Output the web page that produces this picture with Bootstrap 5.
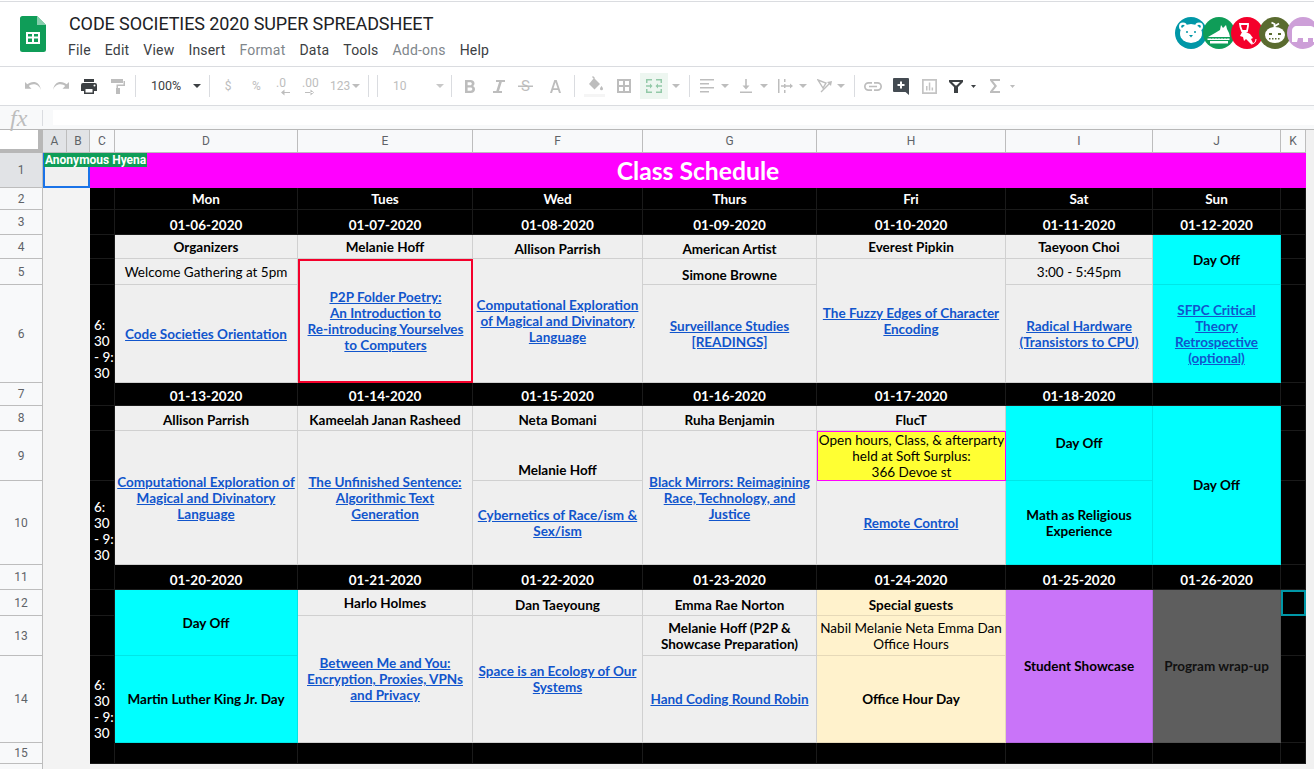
<!DOCTYPE html>
<html lang="en">
    <head>
        <meta charset="UTF-8" />
        <title>CODE SOCIETIES 2020 SUPER SPREADSHEET</title>
        <!-- Bootstrap CSS -->
        <link href="https://cdn.jsdelivr.net/npm/bootstrap@5.3.0/dist/css/bootstrap.min.css" rel="stylesheet" />
        <style>
            html, body { height: 769px; overflow: hidden; }
            body { background: #f1f1f1; font-family: Roboto, "Liberation Sans", sans-serif; }

            /* top chrome */
            .app-head { height: 67px; background: #fff; border-top: 1px solid #fff; border-bottom: 1px solid #dadce0; box-shadow: inset 0 1px 0 #dadce0; }
            .app-logo { margin: 15px 0 0 20px; }
            .app-names { margin: 13px 0 0 23px; }
            .doc-title { font-family: Roboto, sans-serif; font-size: 18px; line-height: 20px; color: #202124; letter-spacing: -.1px; }
            .menu-row { margin: 7px 0 0 -1px; gap: 14px; font-size: 14px; line-height: 18px; color: #3c4043; letter-spacing: .2px; }
            .menu-off { color: #80868b; }
            .people { margin: 16px -5px 0 auto; }
            .people svg { margin-left: -4px; display: block; }
            .people svg:first-child { margin-left: 0; }

            /* toolbar */
            .tool-row { height: 39px; background: #fff; border-bottom: 1px solid #dadce0; padding-left: 25px; color: #bdbdbd; font-size: 12px; }
            .tool-row svg { flex: none; display: block; }
            .tool-sep { flex: none; width: 1px; height: 22px; background: #dadce0; }
            .tool-txt { flex: none; text-align: center; white-space: nowrap; }
            .tool-dark { color: #3c4043; font-size: 12.5px; }
            .merge-on { flex: none; width: 28px; height: 26px; background: #edf6f0; }
            .w8 { width: 8px; } .w12 { width: 12px; } .w20 { width: 20px; } .w30 { width: 30px; }
            .g2 { margin-left: 2px; } .g4 { margin-left: 4px; } .g5 { margin-left: 5px; } .g6 { margin-left: 6px; }
            .g7 { margin-left: 7px; } .g8 { margin-left: 8px; } .g9 { margin-left: 9px; } .g10 { margin-left: 10px; }
            .g11 { margin-left: 11px; } .g12 { margin-left: 12px; } .g13 { margin-left: 13px; } .g14 { margin-left: 14px; }
            .g15 { margin-left: 15px; } .g16 { margin-left: 16px; } .g17 { margin-left: 17px; } .g18 { margin-left: 18px; }
            .g20 { margin-left: 20px; } .g31 { margin-left: 31px; }

            /* formula bar */
            .fx-row { height: 24px; background: #f8f9fa; border-bottom: 1px solid #b7b7b7; }
            .fx-mark { width: 42px; padding-left: 10px; font: italic 24px/22px "Liberation Serif", serif; color: #bdbdbd; }
            .fx-line { width: 1px; height: 16px; background: #dadce0; }
            .fx-input { height: 15px; margin-left: 10px; background: #fff; }

            /* sheet */
            .sheet { table-layout: fixed; width: 1306px; border-collapse: separate; border-spacing: 0; font-family: Lato, "Liberation Sans", sans-serif; font-size: 13.5px; line-height: 16px; color: #000; }
            .sheet td, .sheet th { padding: 0 2px; text-align: center; vertical-align: middle; border-right: 1px solid #d0d0d0; border-bottom: 1px solid #d0d0d0; overflow: hidden; }
            .sheet a { color: #1155cc; font-weight: 700; }
            .sheet th.corner { background: #fff; border-right: 5px solid #b7b7b7; border-bottom: 4px solid #b7b7b7; }
            .sheet th.col-h, .sheet th.row-h { background: #f8f9fa; color: #5f6368; font: 400 12px/14px Roboto, sans-serif; border-color: #bdbdbd; padding: 0; }
            .sheet th.head-on { background: #e1e3e6; }
            .cw-head { width: 43px; } .cw-a { width: 24px; } .cw-b { width: 23px; } .cw-c { width: 25px; }
            .cw-d { width: 183px; } .cw-e { width: 175px; } .cw-f { width: 170px; } .cw-g { width: 174px; }
            .cw-h { width: 189px; } .cw-i { width: 147px; } .cw-j { width: 128px; } .cw-k { width: 25px; }
            .rh-top { height: 23px; } .rh-1 { height: 35px; } .rh-2 { height: 22px; } .rh-3 { height: 25px; } .rh-4 { height: 24px; }
            .rh-5 { height: 26px; } .rh-6 { height: 98px; } .rh-7 { height: 23px; } .rh-8 { height: 25px; } .rh-9 { height: 50px; }
            .rh-10 { height: 84px; } .rh-11 { height: 25px; } .rh-12 { height: 26px; } .rh-13 { height: 40px; } .rh-14 { height: 87px; }
            .rh-15 { height: 21px; } .rh-16 { height: 6px; }
            .rh-3 td, .rh-7 td, .rh-11 td { vertical-align: bottom; padding-bottom: 1px; }
            .rh-8 td.soft { vertical-align: bottom; padding-bottom: 2px; }
            .sheet td.pale { background: #f3f3f3; border-color: #f3f3f3; }
            .sheet td.picked { position: relative; overflow: visible; background: #f0f0f0; border: 0; box-shadow: inset 0 0 0 2px #1a73e8; }
            .hyena { position: absolute; left: 1px; top: 0; z-index: 2; padding: 0 1px; height: 14px; background: #0f9d58; color: #fff; font: 700 12px/14px Roboto, sans-serif; white-space: nowrap; }
            .sheet td.title-cell { background: #ff00ff; color: #fff; font-size: 24.7px; font-weight: 700; border: 0; overflow: visible; }
            .sheet td.ink { background: #000; color: #fff; font-weight: 700; border-color: #1a1a1a; }
            .sheet td.hours { background: #000; color: #fff; font-weight: 500; text-align: left; vertical-align: bottom; padding: 0 0 1px 4px; border-color: #000; border-right-color: #1a1a1a; white-space: nowrap; }
            .sheet td.soft { background: #efefef; }
            .sheet td.sky { background: #00ffff; font-weight: 700; border-color: #00e6e6; }
            .sheet td.cream { background: #fff2cc; border-color: #e6d9b8; }
            .sheet td.grape { background: #c974f9; font-weight: 700; border-color: #b468e0; }
            .sheet td.ash { background: #5e5e5e; font-weight: 700; color: #111; border-color: #555; }
            .sheet td.red-box { box-shadow: inset 0 0 0 2px #f4002b; border: 0; }
            .sheet td.lemon { background: #ffff33; box-shadow: inset 0 0 0 1px #ff00ff; border: 0; padding: 0 1px; }
            .sheet td.teal-box { background: #000; box-shadow: inset 0 0 0 2px #0097a7; border: 0; }
            .low { vertical-align: bottom !important; padding-bottom: 2px !important; }
            .rh-4 .low, .rh-5 .low { padding-bottom: 1px !important; }
        </style>
    </head>
    <body>
        <!-- Title and menus -->
        <header class="app-head d-flex">
            <svg class="app-logo" width="26" height="36" viewBox="0 0 26 36">
                <path d="M2.500 0H17l9 9v24.500a2.500 2.500 0 0 1-2.500 2.500h-21A2.500 2.500 0 0 1 0 33.500v-31A2.500 2.500 0 0 1 2.500 0z" fill="#0f9d58"/>
                <path d="M17 0l9 9h-9z" fill="#87ceac"/>
                <path d="M6 16h14v12H6zm2 2v2.500h4V18zm6 0v2.500h4V18zm-6 4.500V26h4v-3.500zm6 0V26h4v-3.500z" fill="#fff" fill-rule="evenodd"/>
            </svg>
            <div class="app-names">
                <div class="doc-title">CODE SOCIETIES 2020 SUPER SPREADSHEET</div>
                <div class="menu-row d-flex">
                    <span>File</span><span>Edit</span><span>View</span><span>Insert</span><span class="menu-off">Format</span><span>Data</span><span>Tools</span><span class="menu-off">Add-ons</span><span>Help</span>
                </div>
            </div>
            <div class="people d-flex">
                <!-- bear -->
                <svg width="32" height="32" viewBox="0 0 32 32"><circle cx="16" cy="16" r="16" fill="#0097a7"/><circle cx="8" cy="9.500" r="4" fill="#fff"/><circle cx="24" cy="9.500" r="4" fill="#fff"/><circle cx="8" cy="9.500" r="1.800" fill="#0097a7"/><circle cx="24" cy="9.500" r="1.800" fill="#0097a7"/><ellipse cx="16" cy="16.500" rx="11" ry="9.500" fill="#fff"/><circle cx="12" cy="15" r="1" fill="#0097a7"/><circle cx="20" cy="15" r="1" fill="#0097a7"/><path d="M14 18h4l-2 2.500z" fill="#0097a7"/></svg>
                <!-- crocodile -->
                <svg width="32" height="32" viewBox="0 0 32 32"><circle cx="16" cy="16" r="16" fill="#0f9d58"/><path d="M5 20l7-4 5-3 1-5 2 3 3-3 1 4 2 4 1 4z" fill="#fff"/><path d="M4.500 21.500h22V23h-22z" fill="#fff"/><path d="M7 24h18v2.500H7z" fill="#fff"/><path d="M8 20.500h1v1H8zm3 0h1v1h-1zm3 0h1v1h-1zm3 0h1v1h-1zm3 0h1v1h-1zm3 0h1v1h-1z" fill="#0f9d58"/></svg>
                <!-- monkey -->
                <svg width="32" height="32" viewBox="0 0 32 32"><circle cx="16" cy="16" r="16" fill="#f4002b"/><path d="M9 7h8v2l-1 5h-5L9.500 10z" fill="none" stroke="#fff" stroke-width="1.800"/><path d="M11 15l-2 4 3 1 1 4 2-2 2 2 3 3 2-1-2-4 2-1-3-4-4-2z" fill="#fff"/><path d="M20 27c3 0 5-2 5-5" fill="none" stroke="#fff" stroke-width="1"/></svg>
                <!-- pumpkin -->
                <svg width="32" height="32" viewBox="0 0 32 32"><circle cx="16" cy="16" r="16" fill="#5a6b2f"/><path d="M15.500 11V7l-3-1.500M16 9l4-2.500" fill="none" stroke="#fff" stroke-width="1.800"/><ellipse cx="16" cy="18" rx="10" ry="8" fill="#fff"/><path d="M10 16h3v2h-3zm9 0h3v2h-3zM10 21h1.500v1.500H10zm3 0h1.500v1.500H13zm3 0h1.500v1.500H16zm3 0h1.500v1.500H19z" fill="#5a6b2f"/></svg>
                <!-- elephant -->
                <svg width="32" height="32" viewBox="0 0 32 32"><circle cx="16" cy="16" r="16" fill="#cd9fd8"/><path d="M5 25V14c0-3 2-5 5-5h12c4 0 7 2 8 6v10h-4v-4h-5v4h-5v-4h-5l-1 4z" fill="#fff"/></svg>
            </div>
        </header>

        <!-- Toolbar -->
        <div class="tool-row d-flex align-items-center">
            <svg width="16" height="8" viewBox="0 0 16 8"><path d="M16 8C14.500 4 11.500 2.300 8.500 2.300 6.500 2.300 5 3 3.800 4L6.500 6.800H0V0l2.300 2.300C3.900 1 6 0 8.500 0c3.700 0 6.500 2.500 7.500 8z" fill="#bdbdbd"/></svg>
            <svg class="g12" width="16" height="8" viewBox="0 0 16 8"><path d="M0 8C1.500 4 4.500 2.300 7.500 2.300 9.500 2.300 11 3 12.200 4L9.500 6.800H16V0l-2.300 2.300C12.100 1 10 0 7.500 0 3.800 0 1 2.500 0 8z" fill="#bdbdbd"/></svg>
            <svg class="g12" width="16" height="15" viewBox="0 0 16 15"><path d="M3 0h10v3H3zM2 4h12a2 2 0 0 1 2 2v6h-3v3H3v-3H0V6a2 2 0 0 1 2-2zm2.500 6v3.500h7V10zM13.500 5.500a1 1 0 1 0 0 2 1 1 0 0 0 0-2z" fill="#3c4043" fill-rule="evenodd"/></svg>
            <svg class="g14" width="14" height="15" viewBox="0 0 14 15"><path d="M0 0h12v4H0zM12.500 2H14v5H7v2h2v6H5V9h.500V5.500h7z" fill="#bdbdbd"/></svg>
            <span class="tool-sep g10"></span>
            <span class="tool-txt tool-dark w30 g15">100%</span>
            <svg class="g12" width="8" height="4" viewBox="0 0 8 4"><path d="M0 0h8L4 4z" fill="#3c4043"/></svg>
            <span class="tool-sep g8"></span>
            <span class="tool-txt w8 g14">$</span>
            <span class="tool-txt w8 g20">%</span>
            <svg class="g16" width="15" height="20" viewBox="0 0 15 20"><text x="0" y="11" font-family="Roboto, sans-serif" font-size="12" fill="#bdbdbd">.0</text><path d="M6 16h8v1H6zM8.500 13.500v6L5 16.500z" fill="#bdbdbd"/></svg>
            <svg class="g11" width="17" height="20" viewBox="0 0 17 20"><text x="0" y="11" font-family="Roboto, sans-serif" font-size="12" fill="#bdbdbd">.00</text><path d="M3 16h8v1H3zM8.500 13.500v6L12 16.500z" fill="#bdbdbd"/></svg>
            <span class="tool-txt w20 g11">123</span>
            <svg class="g2" width="8" height="4" viewBox="0 0 8 4"><path d="M0 0h8L4 4z" fill="#bdbdbd"/></svg>
            <span class="tool-sep g8"></span>
            <span class="tool-sep g8"></span>
            <span class="tool-txt w12 g15">10</span>
            <svg class="g31" width="8" height="4" viewBox="0 0 8 4"><path d="M0 0h8L4 4z" fill="#c8c8c8"/></svg>
            <span class="tool-sep g7"></span>
            <svg class="g13" width="10" height="13" viewBox="0 0 10 13"><path d="M0 0h5.500C8 0 9.500 1.500 9.500 3.400c0 1.200-.600 2.200-1.700 2.700C9.200 6.600 10 7.800 10 9.200 10 11.400 8.300 13 5.800 13H0zm2.600 2.300v2.900h2.600c.900 0 1.600-.600 1.600-1.500 0-.800-.700-1.400-1.600-1.400zm0 5.100v3.300h3c1 0 1.700-.700 1.700-1.700 0-.900-.700-1.600-1.700-1.600z" fill="#bdbdbd" fill-rule="evenodd"/></svg>
            <svg class="g18" width="12" height="13" viewBox="0 0 12 13"><path d="M3 0h9v2H8.800L6 11h3v2H0v-2h3.300L6.100 2H3z" fill="#bdbdbd"/></svg>
            <svg class="g13" width="15" height="20" viewBox="0 0 15 20"><text x="7.500" y="15" text-anchor="middle" font-family="Roboto, sans-serif" font-size="15" fill="#bdbdbd">S</text><path d="M0 9.500h15V11H0z" fill="#bdbdbd"/></svg>
            <svg class="g17" width="11" height="13" viewBox="0 0 11 13"><path d="M4.300 0h2.400L11 13H9L8 10H3l-1 3H0zm-.800 8.300h4L5.500 2.200z" fill="#bdbdbd" fill-rule="evenodd"/></svg>
            <span class="tool-sep g13"></span>
            <svg class="g9" width="21" height="22" viewBox="0 0 21 22"><path d="M10 3l6 6-5.500 5.500L5 9z" fill="#bdbdbd"/><path d="M9 1l2 2-1 1-2-2z" fill="#bdbdbd"/><path d="M17.500 11c.800 1.200 1.500 2 1.500 2.800a1.500 1.500 0 0 1-3 0c0-.800.700-1.600 1.500-2.800z" fill="#bdbdbd"/><path d="M0 19h21v3H0z" fill="#f5f5f5"/></svg>
            <svg class="g12" width="14" height="14" viewBox="0 0 14 14"><path d="M0 0h14v14H0zm2 2v4h4V2zm6 0v4h4V2zM2 8v4h4V8zm6 0v4h4V8z" fill="#bdbdbd" fill-rule="evenodd"/></svg>
            <div class="merge-on g9 d-flex align-items-center justify-content-center">
                <svg width="16" height="14" viewBox="0 0 16 14"><path d="M0 0h6v1.500H1.500V4H0zM10 0h6v4h-1.500V1.500H10zM0 10h1.500v2.500H6V14H0zM14.500 10H16v4h-6v-1.500h4.500zM0 6.300h4V4.500L6.500 7 4 9.500V7.700H0zM16 6.300h-4V4.500L9.500 7l2.500 2.500V7.700h4z" fill="#93c9a8"/></svg>
            </div>
            <svg class="g4" width="8" height="4" viewBox="0 0 8 4"><path d="M0 0h8L4 4z" fill="#bdbdbd"/></svg>
            <span class="tool-sep g9"></span>
            <svg class="g10" width="14" height="14" viewBox="0 0 14 14"><path d="M0 0h14v1.500H0zM0 4h9v1.500H0zM0 8h14v1.500H0zM0 12h9v1.500H0z" fill="#bdbdbd"/></svg>
            <svg class="g7" width="8" height="4" viewBox="0 0 8 4"><path d="M0 0h8L4 4z" fill="#bdbdbd"/></svg>
            <svg class="g11" width="12" height="14" viewBox="0 0 12 14"><path d="M0 12.500h12V14H0zM5.200 0h1.600v6.500H9.500L6 10.500 2.500 6.500h2.700z" fill="#bdbdbd"/></svg>
            <svg class="g8" width="8" height="4" viewBox="0 0 8 4"><path d="M0 0h8L4 4z" fill="#bdbdbd"/></svg>
            <svg class="g10" width="15" height="14" viewBox="0 0 15 14"><path d="M0 0h1.500v14H0zM6 0h1.500v3H6zM6 5h1.500v4H6zM6 11h1.500v3H6z" fill="#bdbdbd"/><path d="M3 6.300h9V4.500L15 7l-3 2.500V7.700H3z" fill="#bdbdbd"/></svg>
            <svg class="g6" width="8" height="4" viewBox="0 0 8 4"><path d="M0 0h8L4 4z" fill="#bdbdbd"/></svg>
            <svg class="g10" width="15" height="14" viewBox="0 0 15 14"><path d="M1 1l8 3-3 5zM4 13L13 4" fill="none" stroke="#bdbdbd" stroke-width="1.400"/><path d="M15 2l-1 5-4-4z" fill="#bdbdbd"/></svg>
            <svg class="g5" width="8" height="4" viewBox="0 0 8 4"><path d="M0 0h8L4 4z" fill="#bdbdbd"/></svg>
            <span class="tool-sep g9"></span>
            <svg class="g9" width="18" height="9" viewBox="0 0 18 9"><path d="M8 9H4.500a4.500 4.500 0 0 1 0-9H8v1.700H4.500a2.800 2.800 0 0 0 0 5.600H8zM10 0h3.500a4.500 4.500 0 0 1 0 9H10V7.300h3.500a2.800 2.800 0 0 0 0-5.600H10zM5 3.700h8v1.600H5z" fill="#bdbdbd"/></svg>
            <svg class="g11" width="16" height="17" viewBox="0 0 16 17"><path d="M1 0h14a1 1 0 0 1 1 1v16l-3.500-3H1a1 1 0 0 1-1-1V1a1 1 0 0 1 1-1z" fill="#444b52"/><path d="M7 3.500h2V6h2.500v2H9v2.500H7V8H4.500V6H7z" fill="#fff"/></svg>
            <svg class="g13" width="15" height="15" viewBox="0 0 15 15"><path d="M0 0h15v15H0zm1.700 1.700v11.600h11.600V1.700zM4 7h1.500v4.500H4zM6.800 3.500h1.500v8H6.800zM9.600 8.500h1.500v3H9.600z" fill="#c4c4c4" fill-rule="evenodd"/></svg>
            <svg class="g12" width="14" height="13" viewBox="0 0 14 13"><path d="M0 0h14v2L9 7v6H5V7L0 2zm3 2l3.500 3.500h1L11 2z" fill="#3c4043" fill-rule="evenodd"/></svg>
            <svg class="g8" width="5" height="3" viewBox="0 0 5 3"><path d="M0 0h5L2.500 3z" fill="#3c4043"/></svg>
            <svg class="g14" width="10" height="14" viewBox="0 0 10 14"><path d="M0 0h10v2H3l4 5-4 5h7v2H0v-1.500L4.300 7 0 1.500z" fill="#bdbdbd"/></svg>
            <svg class="g10" width="5" height="3" viewBox="0 0 5 3"><path d="M0 0h5L2.500 3z" fill="#bdbdbd"/></svg>
        </div>

        <!-- Formula bar -->
        <div class="fx-row d-flex align-items-center">
            <div class="fx-mark">fx</div>
            <div class="fx-line"></div>
            <div class="fx-input flex-grow-1"></div>
        </div>

        <!-- Sheet -->
        <table class="sheet">
            <colgroup>
                <col class="cw-head" /><col class="cw-a" /><col class="cw-b" /><col class="cw-c" /><col class="cw-d" /><col class="cw-e" />
                <col class="cw-f" /><col class="cw-g" /><col class="cw-h" /><col class="cw-i" /><col class="cw-j" /><col class="cw-k" />
            </colgroup>
            <tr class="rh-top">
                <th class="corner"></th>
                <th class="col-h head-on">A</th><th class="col-h head-on">B</th><th class="col-h">C</th><th class="col-h">D</th><th class="col-h">E</th>
                <th class="col-h">F</th><th class="col-h">G</th><th class="col-h">H</th><th class="col-h">I</th><th class="col-h">J</th><th class="col-h">K</th>
            </tr>
            <tr class="rh-1">
                <th class="row-h head-on">1</th>
                <td class="picked" colspan="2"><div class="hyena">Anonymous Hyena</div></td>
                <td class="title-cell" colspan="9">Class Schedule</td>
            </tr>
            <tr class="rh-2">
                <th class="row-h">2</th>
                <td class="pale" colspan="2" rowspan="15"></td>
                <td class="ink"></td><td class="ink">Mon</td><td class="ink">Tues</td><td class="ink">Wed</td><td class="ink">Thurs</td><td class="ink">Fri</td><td class="ink">Sat</td><td class="ink">Sun</td><td class="ink"></td>
            </tr>
            <tr class="rh-3">
                <th class="row-h">3</th>
                <td class="ink"></td><td class="ink">01-06-2020</td><td class="ink">01-07-2020</td><td class="ink">01-08-2020</td><td class="ink">01-09-2020</td><td class="ink">01-10-2020</td><td class="ink">01-11-2020</td><td class="ink">01-12-2020</td><td class="ink"></td>
            </tr>
            <tr class="rh-4">
                <th class="row-h">4</th>
                <td class="ink"></td>
                <td class="soft fw-bold">Organizers</td>
                <td class="soft fw-bold">Melanie Hoff</td>
                <td class="soft fw-bold low">Allison Parrish</td>
                <td class="soft fw-bold low">American Artist</td>
                <td class="soft fw-bold">Everest Pipkin</td>
                <td class="soft fw-bold">Taeyoon Choi</td>
                <td class="sky" rowspan="2">Day Off</td>
                <td class="ink"></td>
            </tr>
            <tr class="rh-5">
                <th class="row-h">5</th>
                <td class="ink"></td>
                <td class="soft">Welcome Gathering at 5pm</td>
                <td class="soft red-box" rowspan="2"><a href="#">P2P Folder Poetry:<br />An Introduction to<br />Re-introducing Yourselves<br />to Computers</a></td>
                <td class="soft" rowspan="2"><a href="#">Computational Exploration of Magical and Divinatory Language</a></td>
                <td class="soft fw-bold low">Simone Browne</td>
                <td class="soft" rowspan="2"><a href="#">The Fuzzy Edges of Character Encoding</a></td>
                <td class="soft">3:00 - 5:45pm</td>
                <td class="ink"></td>
            </tr>
            <tr class="rh-6">
                <th class="row-h">6</th>
                <td class="hours">6:<br />30<br />- 9:<br />30</td>
                <td class="soft"><a href="#">Code Societies Orientation</a></td>
                <td class="soft"><a href="#">Surveillance Studies [READINGS]</a></td>
                <td class="soft"><a href="#">Radical Hardware (Transistors to CPU)</a></td>
                <td class="sky"><a href="#">SFPC Critical Theory Retrospective (optional)</a></td>
                <td class="ink"></td>
            </tr>
            <tr class="rh-7">
                <th class="row-h">7</th>
                <td class="ink"></td><td class="ink">01-13-2020</td><td class="ink">01-14-2020</td><td class="ink">01-15-2020</td><td class="ink">01-16-2020</td><td class="ink">01-17-2020</td><td class="ink">01-18-2020</td><td class="ink"></td><td class="ink"></td>
            </tr>
            <tr class="rh-8">
                <th class="row-h">8</th>
                <td class="ink"></td>
                <td class="soft fw-bold">Allison Parrish</td>
                <td class="soft fw-bold">Kameelah Janan Rasheed</td>
                <td class="soft fw-bold">Neta Bomani</td>
                <td class="soft fw-bold">Ruha Benjamin</td>
                <td class="soft fw-bold">FlucT</td>
                <td class="sky" rowspan="2">Day Off</td>
                <td class="sky" rowspan="3">Day Off</td>
                <td class="ink"></td>
            </tr>
            <tr class="rh-9">
                <th class="row-h">9</th>
                <td class="ink"></td>
                <td class="soft" rowspan="2"><a href="#">Computational Exploration of Magical and Divinatory Language</a></td>
                <td class="soft" rowspan="2"><a href="#">The Unfinished Sentence:<br />Algorithmic Text<br />Generation</a></td>
                <td class="soft fw-bold low">Melanie Hoff</td>
                <td class="soft" rowspan="2"><a href="#">Black Mirrors: Reimagining Race, Technology, and Justice</a></td>
                <td class="lemon">Open hours, Class, &amp; afterparty<br />held at Soft Surplus:<br />366 Devoe st</td>
                <td class="ink"></td>
            </tr>
            <tr class="rh-10">
                <th class="row-h">10</th>
                <td class="hours">6:<br />30<br />- 9:<br />30</td>
                <td class="soft"><a href="#">Cybernetics of Race/ism &amp; Sex/ism</a></td>
                <td class="soft"><a href="#">Remote Control</a></td>
                <td class="sky">Math as Religious Experience</td>
                <td class="ink"></td>
            </tr>
            <tr class="rh-11">
                <th class="row-h">11</th>
                <td class="ink"></td><td class="ink">01-20-2020</td><td class="ink">01-21-2020</td><td class="ink">01-22-2020</td><td class="ink">01-23-2020</td><td class="ink">01-24-2020</td><td class="ink">01-25-2020</td><td class="ink">01-26-2020</td><td class="ink"></td>
            </tr>
            <tr class="rh-12">
                <th class="row-h">12</th>
                <td class="ink"></td>
                <td class="sky" rowspan="2">Day Off</td>
                <td class="soft fw-bold">Harlo Holmes</td>
                <td class="soft fw-bold low">Dan Taeyoung</td>
                <td class="soft fw-bold low">Emma Rae Norton</td>
                <td class="cream fw-bold low">Special guests</td>
                <td class="grape" rowspan="3">Student Showcase</td>
                <td class="ash" rowspan="3">Program wrap-up</td>
                <td class="teal-box"></td>
            </tr>
            <tr class="rh-13">
                <th class="row-h">13</th>
                <td class="ink"></td>
                <td class="soft" rowspan="2"><a href="#">Between Me and You: Encryption, Proxies, VPNs and Privacy</a></td>
                <td class="soft" rowspan="2"><a href="#">Space is an Ecology of Our Systems</a></td>
                <td class="soft fw-bold">Melanie Hoff (P2P &amp; Showcase Preparation)</td>
                <td class="cream text-nowrap">Nabil Melanie Neta Emma Dan<br />Office Hours</td>
                <td class="ink"></td>
            </tr>
            <tr class="rh-14">
                <th class="row-h">14</th>
                <td class="hours">6:<br />30<br />- 9:<br />30</td>
                <td class="sky">Martin Luther King Jr. Day</td>
                <td class="soft"><a href="#">Hand Coding Round Robin</a></td>
                <td class="cream fw-bold">Office Hour Day</td>
                <td class="ink"></td>
            </tr>
            <tr class="rh-15">
                <th class="row-h">15</th>
                <td class="ink"></td><td class="ink"></td><td class="ink"></td><td class="ink"></td><td class="ink"></td><td class="ink"></td><td class="ink"></td><td class="ink"></td><td class="ink"></td>
            </tr>
            <tr class="rh-16">
                <th class="row-h"></th>
                <td class="pale" colspan="9"></td>
            </tr>
        </table>
    </body>
</html>
